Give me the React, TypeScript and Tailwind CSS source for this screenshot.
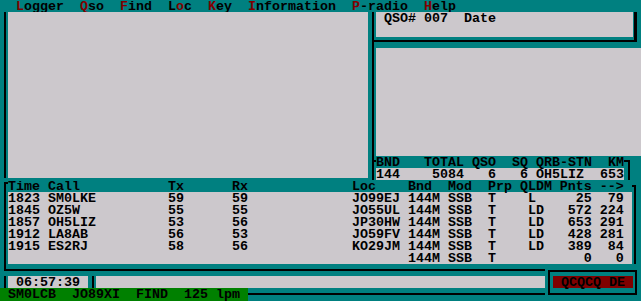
type Cell = [number, string];

// lay out text items on the 80-column character grid, starting at column `from`
function place(items: Cell[], from: number) {
  let s = "";
  for (const [c, t] of items) {
    while (s.length < c - from) s += " ";
    s += t;
  }
  return s;
}
const right = (end: number, t: string): Cell => [end - t.length + 1, t];

const menu: [string, string, string][] = [
  ["", "L", "ogger"],
  ["", "Q", "so"],
  ["", "F", "ind"],
  ["L", "o", "c"],
  ["", "K", "ey"],
  ["", "I", "nformation"],
  ["", "P", "-radio"],
  ["", "H", "elp"],
];

const qsos = [
  ["1823", "SM0LKE", "59", "59", "JO99EJ", "L", "25", "79"],
  ["1845", "OZ5W", "55", "55", "JO55UL", "LD", "572", "224"],
  ["1857", "OH5LIZ", "53", "56", "JP30HW", "LD", "653", "291"],
  ["1912", "LA8AB", "56", "53", "JO59FV", "LD", "428", "281"],
  ["1915", "ES2RJ", "58", "56", "KO29JM", "LD", "389", "84"],
  ["", "", "", "", "", "", "0", "0"],
];

const header = place(
  [
    [1, "Time"],
    [6, "Call"],
    [21, "Tx"],
    [29, "Rx"],
    [44, "Loc"],
    [51, "Bnd"],
    [56, "Mod"],
    [61, "Prp"],
    [65, "QLDM"],
    [70, "Pnts"],
    [75, "-->"],
  ],
  1
);

function qsoLine(q: string[]) {
  return place(
    [
      [1, q[0]],
      [6, q[1]],
      [21, q[2]],
      [29, q[3]],
      [44, q[4]],
      [51, "144M"],
      [56, "SSB"],
      [61, "T"],
      [66, q[5]],
      right(73, q[6]),
      right(77, q[7]),
    ],
    1
  );
}

const statHead = place(
  [
    [47, "BND"],
    [53, "TOTAL"],
    [59, "QSO"],
    [64, "SQ"],
    [67, "QRB-STN"],
    [76, "KM"],
  ],
  47
);
const statVals = place(
  [
    [47, "144"],
    [54, "5084"],
    [61, "6"],
    [65, "6"],
    [67, "OH5LIZ"],
    [75, "653"],
  ],
  47
);
const status = place(
  [
    [1, "SM0LCB"],
    [9, "JO89XI"],
    [17, "FIND"],
    [23, "125"],
    [27, "lpm"],
  ],
  0
);

export default function App() {
  return (
    <div className="w-[641px] h-[301px] overflow-hidden bg-[#008080] text-black font-['Liberation_Mono',monospace] font-bold text-[13.333px] leading-[10px] whitespace-pre">
      {/* menu bar */}
      <div className="h-[12px] pt-[2px] pl-[16px] flex">
        {menu.map(([pre, hot, post], i) => (
          <span key={i} className={i ? "ml-[16px]" : ""}>
            {pre}
            <span className="text-[#800000]">{hot}</span>
            {post}
          </span>
        ))}
      </div>

      {/* upper panels */}
      <div className="flex h-[168px]">
        <div className="w-[368px] flex">
          <div className="ml-[4px] w-[2px] h-[166px] bg-black" />
          <div className="ml-[2px] w-[360px] h-[166px] bg-[#ccc8cc]" />
        </div>
        <div className="ml-[4px] w-[269px] border-l-[2px] border-black flex flex-col">
          <div className="w-[263px] h-[30px] border-r-[3px] border-b-[2px] border-black">
            <div className="ml-[2px] w-[257px] h-[25px] bg-[#ccc8cc] pl-[8px] pt-[2px]">QSO# 007  Date</div>
          </div>
          <div className="mt-[6px] ml-[2px] h-[108px] bg-[#ccc8cc]" />
          <div className="flex h-[24px]">
            <div className="mt-[4px] w-[2px] h-[2px] bg-black" />
            <div className="w-[248px]">
              <div className="h-[12px] pt-[2px]">{statHead}</div>
              <div className="h-[12px] pt-[2px] bg-[#ccc8cc]">{statVals}</div>
            </div>
            <div className="mt-[4px] w-[6px] h-[20px] border-t-[2px] border-r-[2px] border-black" />
          </div>
        </div>
      </div>

      {/* qso list */}
      <div className="flex h-[84px]">
        <div className="w-[8px] pl-[4px] pt-[2px]">
          <div className="w-[4px] h-[82px] border-l-[2px] border-t-[2px] border-black" />
        </div>
        <div className="w-[624px]">
          <div className="h-[12px] pt-[2px]">{header}</div>
          <div className="h-[72px] bg-[#ccc8cc]">
            {qsos.map((q, i) => (
              <div key={i} className="h-[12px] pt-[2px]">
                {qsoLine(q)}
              </div>
            ))}
          </div>
        </div>
        <div className="pt-[5px]">
          <div className="w-[4px] h-[79px] border-t-[2px] border-r-[2px] border-black" />
        </div>
      </div>

      {/* bottom: clock, input line, status, cq box */}
      <div className="flex h-[37px]">
        <div className="w-[545px]">
          <div className="h-[12px] pl-[4px]">
            <div className="h-[7px] border-l-[2px] border-b-[2px] border-black" />
          </div>
          <div className="h-[12px] flex">
            <div className="ml-[4px] w-[2px] bg-black" />
            <div className="ml-[2px] w-[80px] bg-[#ccc8cc] pl-[8px] pt-[2px]">06:57:39</div>
            <div className="ml-[4px] w-[2px] bg-black" />
            <div className="ml-[2px] flex-1 bg-[#ccc8cc]" />
          </div>
          <div className="h-[13px] flex">
            <div className="w-[248px] bg-[#008000] pt-[2px]">{status}</div>
            <div className="flex-1 mt-[5px] h-[2px] bg-black" />
          </div>
        </div>
        <div className="ml-[3px] mt-[6px] w-[89px] h-[25px] border-[2px] border-black">
          <div className="ml-[3px] mt-[4px] w-[80px] h-[12px] bg-[#800000] pl-[8px] pt-[2px]">QCQCQ DE</div>
        </div>
      </div>
    </div>
  );
}
